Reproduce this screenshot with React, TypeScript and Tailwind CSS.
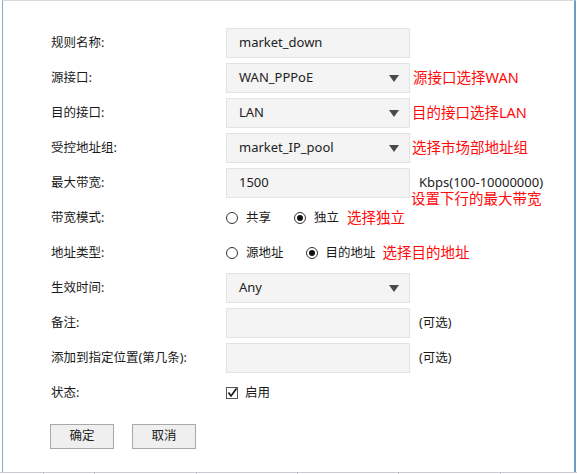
import React from "react";

const font = { fontFamily: '"Noto Sans", "Noto Sans CJK SC", sans-serif' };

function Label({ children }: { children: React.ReactNode }) {
  return <div className="w-[175px] shrink-0 text-[12.5px] text-[#1a1a1a]">{children}</div>;
}

function Input({ value }: { value?: string }) {
  return (
    <div className="w-[184px] h-[30px] shrink-0 bg-[#f4f4f4] border border-[#e3e3e3] flex items-center pl-[12px] text-[13px] text-[#222]">
      {value}
    </div>
  );
}

function Select({ value }: { value: string }) {
  return (
    <div className="w-[184px] h-[30px] shrink-0 bg-[#f4f4f4] border border-[#e3e3e3] flex items-center justify-between pl-[12px] pr-[10px] text-[13px] text-[#222]">
      <span>{value}</span>
      <svg width="10" height="7" viewBox="0 0 10 7">
        <polygon points="0,0 10,0 5,7" fill="#4a4a4a" />
      </svg>
    </div>
  );
}

function Red({ children, className = "" }: { children: React.ReactNode; className?: string }) {
  return <span className={"text-[14.5px] text-[#ff0a0a] whitespace-nowrap " + className}>{children}</span>;
}

function Radio({ checked, label }: { checked?: boolean; label: string }) {
  return (
    <div className="flex items-center">
      <span className="w-[12px] h-[12px] rounded-full border border-[#333] bg-white flex items-center justify-center">
        {checked && <span className="w-[6px] h-[6px] rounded-full bg-[#111]" />}
      </span>
      <span className="ml-[8px] text-[12.5px] text-[#1a1a1a]">{label}</span>
    </div>
  );
}

function Row({ children }: { children: React.ReactNode }) {
  return <div className="h-[30px] flex items-center">{children}</div>;
}

export default function App() {
  const cols = [43, 51, 102, 101, 101, 102, 77];
  return (
    <div className="w-[577px] h-[474px] bg-white overflow-hidden flex flex-col" style={font}>
      <div className="ml-[2px] w-[574px] h-[472px] border-t border-t-[#d9d9d9] border-l border-l-[#8fa8c6] border-r-2 border-r-[#6f9bc8] pt-[27px] pl-[48px] flex flex-col">
        <div className="flex flex-col gap-[5px]">
          <Row>
            <Label>规则名称:</Label>
            <Input value="market_down" />
          </Row>
          <Row>
            <Label>源接口:</Label>
            <Select value="WAN_PPPoE" />
            <Red className="ml-[3px]">源接口选择WAN</Red>
          </Row>
          <Row>
            <Label>目的接口:</Label>
            <Select value="LAN" />
            <Red className="ml-[2px]">目的接口选择LAN</Red>
          </Row>
          <Row>
            <Label>受控地址组:</Label>
            <Select value="market_IP_pool" />
            <Red className="ml-[2px]">选择市场部地址组</Red>
          </Row>
          <Row>
            <Label>最大带宽:</Label>
            <Input value="1500" />
            <div className="self-start flex flex-col pt-[7px]">
              <span className="ml-[9px] h-[15px] leading-[15px] text-[13px] text-[#222] whitespace-nowrap">Kbps(100-10000000)</span>
              <Red className="ml-[1px] h-[15px] leading-[15px] mt-[1px]">设置下行的最大带宽</Red>
            </div>
          </Row>
          <Row>
            <Label>带宽模式:</Label>
            <Radio label="共享" />
            <div className="ml-[23px]">
              <Radio checked label="独立" />
            </div>
            <Red className="ml-[8px]">选择独立</Red>
          </Row>
          <Row>
            <Label>地址类型:</Label>
            <Radio label="源地址" />
            <div className="ml-[22px]">
              <Radio checked label="目的地址" />
            </div>
            <Red className="ml-[7px]">选择目的地址</Red>
          </Row>
          <Row>
            <Label>生效时间:</Label>
            <Select value="Any" />
          </Row>
          <Row>
            <Label>备注:</Label>
            <Input />
            <span className="ml-[9px] text-[12.5px] text-[#1a1a1a]">(可选)</span>
          </Row>
          <Row>
            <Label>添加到指定位置(第几条):</Label>
            <Input />
            <span className="ml-[9px] text-[12.5px] text-[#1a1a1a]">(可选)</span>
          </Row>
          <Row>
            <Label>状态:</Label>
            <span className="w-[12px] h-[12px] border-[1.5px] border-[#555] bg-white flex items-center justify-center">
              <svg width="10" height="10" viewBox="0 0 10 10">
                <polyline points="1.5,4.5 4,8 9.5,0.5" fill="none" stroke="#111" strokeWidth="1.6" />
              </svg>
            </span>
            <span className="ml-[7px] text-[12.5px] text-[#1a1a1a]">启用</span>
          </Row>
        </div>
        <div className="mt-[16px] ml-[-1px] flex gap-[18px]">
          <button className="w-[64px] h-[25px] bg-[#efefef] border border-[#a8a8a8] text-[12.5px] text-[#222]">确定</button>
          <button className="w-[64px] h-[25px] bg-[#efefef] border border-[#a8a8a8] text-[12.5px] text-[#222]">取消</button>
        </div>
      </div>
      <div className="h-[2px] flex border-t border-t-[#c5ccd4]">
        {cols.map((w, i) => (
          <div key={i} className={i === 0 ? "h-full" : "h-full border-l border-l-[#c5ccd4]"} style={{ width: w }} />
        ))}
      </div>
    </div>
  );
}
